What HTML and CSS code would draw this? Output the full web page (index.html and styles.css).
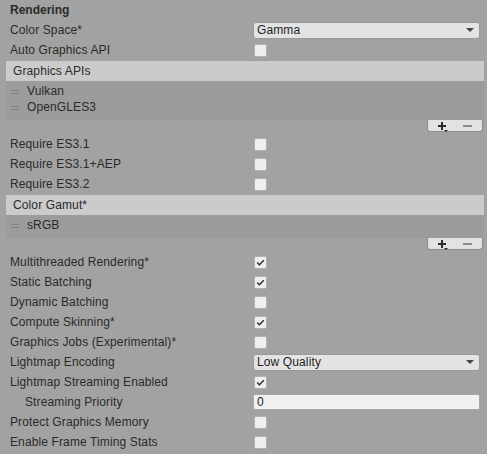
FILE: index.html
```html
<!DOCTYPE html>
<html>
<head>
<meta charset="utf-8">
<link rel="stylesheet" href="styles.css">
</head>
<body>
<div class="inspector">
  <div class="row first"><span class="label bold">Rendering</span></div>
  <div class="row"><span class="label">Color Space*</span><div class="dropdown"><span>Gamma</span><i class="arrow"></i></div></div>
  <div class="row"><span class="label">Auto Graphics API</span><span class="check"></span></div>

  <div class="list">
    <div class="list-header">Graphics APIs</div>
    <div class="list-body">
      <div class="item"><span class="handle"></span>Vulkan</div>
      <div class="item"><span class="handle"></span>OpenGLES3</div>
    </div>
    <div class="list-footer">
      <div class="footer-btns">
        <svg class="plus" width="12" height="11" viewBox="0 0 12 11"><path d="M0 4h8v2H0zM3 1h2v8H3z" fill="#2c2c2c"/><path d="M6 9h4l-2 2z" fill="#2c2c2c"/></svg>
        <svg class="minus" width="9" height="2" viewBox="0 0 9 2"><rect width="9" height="2" fill="#8c8c8c"/></svg>
      </div>
    </div>
  </div>

  <div class="row after-list"><span class="label">Require ES3.1</span><span class="check"></span></div>
  <div class="row"><span class="label">Require ES3.1+AEP</span><span class="check"></span></div>
  <div class="row"><span class="label">Require ES3.2</span><span class="check"></span></div>

  <div class="list">
    <div class="list-header">Color Gamut*</div>
    <div class="list-body">
      <div class="item"><span class="handle"></span>sRGB</div>
    </div>
    <div class="list-footer">
      <div class="footer-btns">
        <svg class="plus" width="12" height="11" viewBox="0 0 12 11"><path d="M0 4h8v2H0zM3 1h2v8H3z" fill="#2c2c2c"/><path d="M6 9h4l-2 2z" fill="#2c2c2c"/></svg>
        <svg class="minus" width="9" height="2" viewBox="0 0 9 2"><rect width="9" height="2" fill="#8c8c8c"/></svg>
      </div>
    </div>
  </div>

  <div class="row after-list"><span class="label">Multithreaded Rendering*</span><span class="check on"><svg width="13" height="13" viewBox="0 0 13 13"><path d="M3.2 6.6l2.2 2.2 4.4-4.6" fill="none" stroke="#2a2a2a" stroke-width="1.4"/></svg></span></div>
  <div class="row"><span class="label">Static Batching</span><span class="check on"><svg width="13" height="13" viewBox="0 0 13 13"><path d="M3.2 6.6l2.2 2.2 4.4-4.6" fill="none" stroke="#2a2a2a" stroke-width="1.4"/></svg></span></div>
  <div class="row"><span class="label">Dynamic Batching</span><span class="check"></span></div>
  <div class="row"><span class="label">Compute Skinning*</span><span class="check on"><svg width="13" height="13" viewBox="0 0 13 13"><path d="M3.2 6.6l2.2 2.2 4.4-4.6" fill="none" stroke="#2a2a2a" stroke-width="1.4"/></svg></span></div>
  <div class="row"><span class="label">Graphics Jobs (Experimental)*</span><span class="check"></span></div>
  <div class="row"><span class="label">Lightmap Encoding</span><div class="dropdown"><span>Low Quality</span><i class="arrow"></i></div></div>
  <div class="row"><span class="label">Lightmap Streaming Enabled</span><span class="check on"><svg width="13" height="13" viewBox="0 0 13 13"><path d="M3.2 6.6l2.2 2.2 4.4-4.6" fill="none" stroke="#2a2a2a" stroke-width="1.4"/></svg></span></div>
  <div class="row"><span class="label indent">Streaming Priority</span><div class="field">0</div></div>
  <div class="row"><span class="label">Protect Graphics Memory</span><span class="check"></span></div>
  <div class="row"><span class="label">Enable Frame Timing Stats</span><span class="check"></span></div>
</div>
</body>
</html>
```
FILE: styles.css
```css
html, body {
  margin: 0;
  padding: 0;
  background: #a2a2a2;
}
body {
  font-family: "Liberation Sans", Arial, sans-serif;
  font-size: 12px;
  color: #2a2a2a;
  letter-spacing: 0.12px;
  overflow: hidden;
}
.inspector {
  padding-top: 1px;
}
.row {
  display: flex;
  align-items: center;
  height: 18px;
  margin-top: 2px;
  padding-left: 10px;
  padding-right: 7px;
}
.row.first {
  margin-top: 0;
}
.row.after-list {
  margin-top: 3px;
}
.label {
  flex: none;
  width: 243px;
  white-space: nowrap;
}
.label.bold {
  font-weight: bold;
  letter-spacing: 0;
}
.label.indent {
  padding-left: 15px;
  width: 228px;
}
.dropdown {
  flex: 1;
  height: 17px;
  box-sizing: border-box;
  background: #e3e3e3;
  border: 1px solid #999999;
  border-radius: 3px;
  display: flex;
  align-items: center;
  padding-left: 3px;
  padding-right: 5px;
  color: #1e1e1e;
}
.dropdown span {
  flex: 1;
}
.arrow {
  width: 0;
  height: 0;
  border-left: 4px solid transparent;
  border-right: 4px solid transparent;
  border-top: 4px solid #444444;
}
.check {
  flex: none;
  width: 13px;
  height: 13px;
  box-sizing: border-box;
  margin-left: 1px;
  background: #efefef;
  border: 1px solid #b2b2b2;
  border-radius: 2px;
  display: flex;
  align-items: center;
  justify-content: center;
}
.check svg {
  display: block;
  margin: -1px;
}
.field {
  flex: 1;
  height: 16px;
  box-sizing: border-box;
  background: #f0f0f0;
  border: 1px solid #a8a8a8;
  border-radius: 2px;
  padding-left: 3px;
  line-height: 14px;
  color: #1e1e1e;
}
.list {
  margin: 2px 3px 0 6px;
}
.list-header {
  height: 20px;
  line-height: 20px;
  background: #cbcbcb;
  padding-left: 7px;
}
.list-body {
  background: #9c9c9c;
  padding: 2px 0 5px;
}
.item {
  height: 16px;
  display: flex;
  align-items: center;
  padding-left: 5px;
}
.handle {
  width: 8px;
  height: 4px;
  box-sizing: border-box;
  border-top: 1px solid #828282;
  border-bottom: 1px solid #828282;
  margin-right: 8px;
  margin-top: 1px;
}
.list-footer {
  display: flex;
  justify-content: flex-end;
  padding-right: 1px;
  margin-bottom: 1px;
}
.footer-btns {
  width: 56px;
  height: 12px;
  box-sizing: border-box;
  background: #e2e2e2;
  border: 1px solid #8c8c8c;
  border-top: none;
  border-radius: 0 0 3px 3px;
  display: flex;
  align-items: flex-start;
}
.footer-btns .plus {
  margin-left: 10px;
  margin-top: 1px;
}
.footer-btns .minus {
  margin-left: 13px;
  margin-top: 5px;
}
```
